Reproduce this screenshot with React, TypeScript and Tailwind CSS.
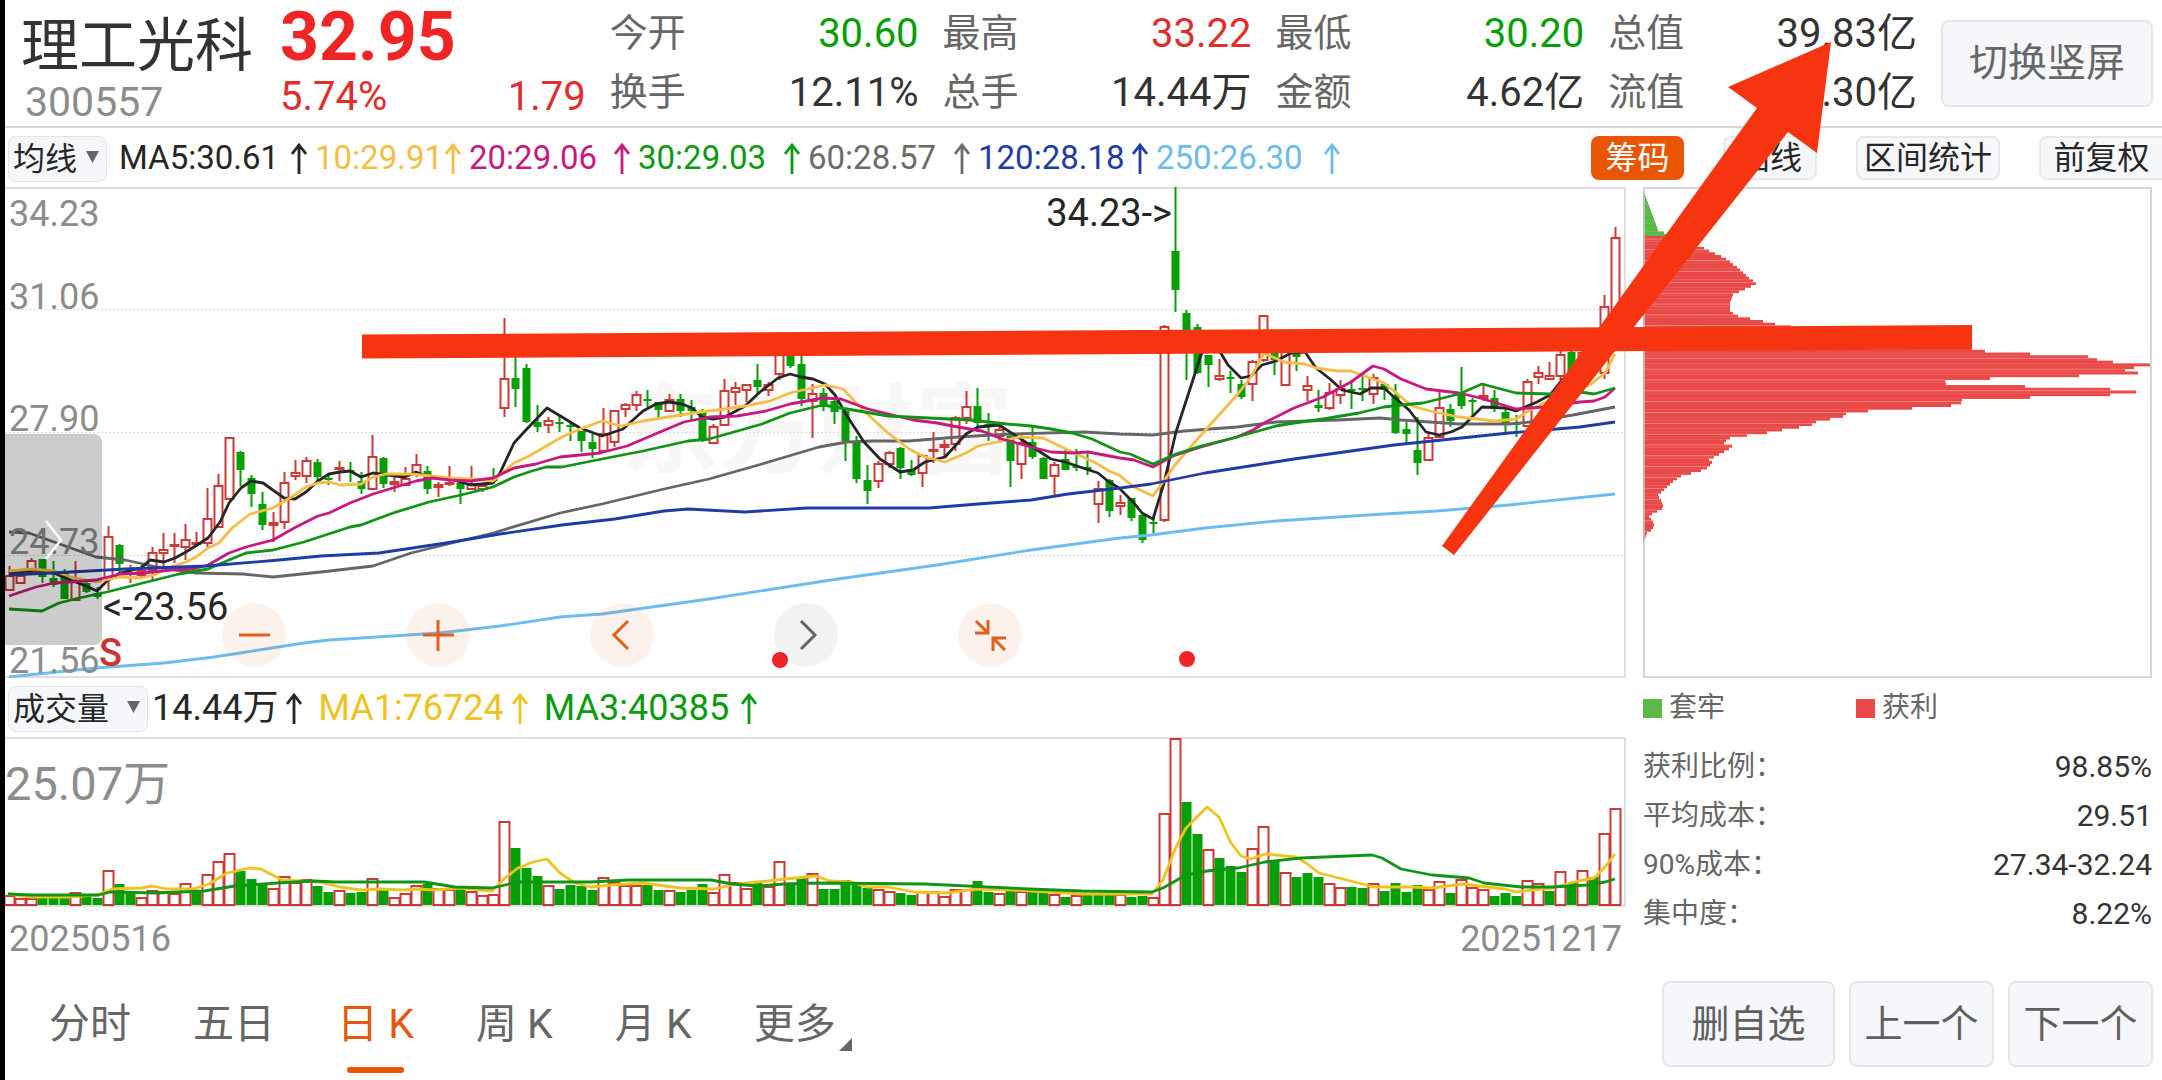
import clsx from "clsx"

type Candle = ["u" | "d", number, number, number, number]
type Point = [number, number]

const UP = "#cb3a36"
const DOWN = "#05a005"

// direction, high, body top, body bottom, low
const candles: Candle[] = [
  ["u", 379, 388, 403, 403], ["u", 383, 388, 396, 396], ["u", 371, 373, 386, 388], ["d", 372, 372, 390, 396],
  ["d", 374, 391, 398, 400], ["d", 382, 386, 412, 412], ["u", 374, 393, 413, 413], ["d", 395, 396, 405, 406],
  ["d", 400, 406, 410, 412], ["u", 339, 349, 391, 403], ["d", 357, 358, 377, 385], ["u", 378, 385, 387, 396],
  ["u", 378, 383, 388, 390], ["u", 360, 365, 383, 394], ["u", 346, 362, 366, 380], ["u", 346, 357, 358, 376],
  ["u", 337, 352, 360, 373], ["u", 345, 355, 357, 360], ["u", 301, 331, 356, 360], ["u", 287, 298, 340, 340],
  ["u", 250, 250, 312, 312], ["d", 264, 265, 283, 299], ["d", 288, 291, 307, 320], ["d", 305, 317, 338, 343],
  ["u", 325, 335, 338, 355], ["u", 285, 295, 335, 342], ["u", 273, 285, 289, 293], ["u", 270, 273, 289, 296],
  ["d", 272, 275, 290, 294], ["d", 286, 291, 293, 298], ["u", 274, 280, 282, 294], ["d", 275, 283, 285, 295],
  ["d", 285, 294, 302, 307], ["u", 248, 269, 302, 302], ["d", 270, 271, 297, 301], ["u", 290, 294, 297, 305],
  ["u", 280, 291, 298, 298], ["u", 267, 277, 286, 290], ["d", 279, 284, 302, 307], ["u", 295, 297, 300, 310],
  ["u", 279, 295, 296, 299], ["d", 295, 296, 302, 317], ["u", 279, 296, 302, 303], ["u", 297, 298, 302, 305],
  ["d", 281, 292, 294, 297], ["u", 131, 191, 221, 230], ["d", 168, 191, 202, 220], ["d", 177, 181, 235, 236],
  ["d", 218, 235, 240, 245], ["u", 230, 233, 238, 246], ["d", 227, 235, 236, 245], ["d", 235, 238, 239, 254],
  ["d", 244, 244, 254, 265], ["d", 247, 255, 262, 271], ["u", 221, 246, 264, 266], ["u", 223, 223, 255, 260],
  ["u", 216, 217, 222, 230], ["u", 204, 207, 218, 224], ["d", 203, 212, 214, 220], ["d", 215, 215, 223, 231],
  ["u", 207, 212, 224, 224], ["d", 207, 212, 224, 230], ["d", 213, 220, 224, 234], ["d", 222, 224, 254, 255],
  ["u", 237, 239, 256, 256], ["u", 192, 203, 238, 238], ["u", 195, 200, 205, 218], ["u", 197, 197, 203, 215],
  ["d", 177, 193, 200, 208], ["u", 195, 197, 203, 209], ["u", 163, 163, 187, 193], ["d", 163, 163, 179, 181],
  ["d", 168, 177, 212, 219], ["u", 197, 206, 214, 251], ["d", 201, 206, 220, 224], ["d", 213, 214, 225, 237],
  ["d", 222, 224, 254, 274], ["d", 249, 254, 292, 296], ["d", 278, 293, 304, 317], ["u", 274, 276, 294, 301],
  ["u", 264, 265, 277, 281], ["d", 260, 261, 281, 292], ["d", 273, 282, 288, 289], ["u", 267, 268, 286, 300],
  ["u", 245, 262, 264, 276], ["u", 253, 257, 260, 270], ["u", 229, 230, 257, 264], ["u", 204, 219, 231, 237],
  ["d", 201, 219, 236, 245], ["d", 226, 237, 238, 254], ["u", 238, 242, 249, 256], ["d", 245, 249, 274, 300],
  ["u", 247, 255, 277, 292], ["d", 239, 255, 270, 272], ["d", 270, 271, 292, 292], ["u", 275, 277, 289, 308],
  ["d", 263, 272, 283, 283], ["d", 262, 279, 281, 284], ["d", 267, 280, 283, 288], ["u", 294, 301, 317, 336],
  ["d", 292, 293, 324, 330], ["u", 308, 315, 319, 328], ["d", 311, 311, 331, 334], ["d", 327, 328, 353, 356],
  ["d", 330, 335, 336, 346], ["u", 138, 139, 333, 335], ["d", 0, 64, 103, 125], ["d", 123, 126, 158, 193],
  ["d", 137, 140, 186, 187], ["d", 168, 168, 178, 200], ["u", 172, 188, 192, 194], ["d", 184, 190, 191, 206],
  ["d", 193, 197, 210, 212], ["u", 173, 174, 197, 214], ["u", 128, 128, 173, 175], ["d", 160, 163, 173, 188],
  ["u", 153, 160, 198, 198], ["d", 156, 160, 170, 184], ["u", 189, 198, 203, 214], ["d", 203, 218, 221, 225],
  ["u", 196, 205, 221, 223], ["u", 193, 201, 208, 217], ["d", 195, 202, 204, 222], ["d", 189, 201, 203, 214],
  ["u", 187, 190, 207, 217], ["d", 196, 197, 203, 213], ["d", 197, 208, 246, 247], ["d", 235, 242, 247, 256],
  ["d", 230, 263, 276, 288], ["u", 245, 250, 273, 273], ["u", 204, 220, 250, 250], ["d", 217, 222, 234, 240],
  ["d", 180, 207, 219, 222], ["d", 211, 213, 214, 232], ["u", 196, 208, 211, 214], ["d", 203, 211, 222, 225],
  ["d", 222, 225, 236, 246], ["d", 228, 236, 238, 250], ["u", 192, 194, 239, 240], ["u", 179, 185, 190, 197],
  ["u", 175, 188, 192, 193], ["u", 163, 167, 189, 193], ["d", 160, 165, 190, 193], ["u", 160, 165, 186, 190],
  ["u", 160, 168, 184, 187], ["u", 108, 119, 186, 192], ["u", 40, 50, 140, 143],
]

const priceLines: { color: string; points: Point[] }[] = [
  {
    color: "#6cbcee",
    points: [[4, 490], [91, 481], [159, 476], [209, 470], [299, 456], [324, 453], [356, 451], [434, 446], [495, 439], [555, 430], [597, 427], [704, 412], [826, 393], [932, 378], [1026, 363], [1115, 351], [1146, 348], [1200, 341], [1271, 334], [1379, 327], [1432, 324], [1504, 318], [1610, 307]],
  },
  {
    color: "#666666",
    points: [[4, 345], [24, 346], [49, 355], [91, 370], [120, 373], [152, 380], [191, 386], [238, 387], [268, 390], [316, 385], [368, 379], [406, 366], [488, 346], [555, 326], [597, 317], [659, 302], [704, 292], [757, 277], [814, 260], [842, 255], [867, 254], [904, 254], [953, 250], [1006, 247], [1079, 245], [1115, 247], [1148, 248], [1179, 244], [1232, 240], [1271, 235], [1332, 233], [1375, 231], [1396, 233], [1454, 237], [1504, 237], [1525, 235], [1568, 228], [1589, 224], [1610, 220]],
  },
  {
    color: "#262626",
    points: [[4, 386], [31, 383], [49, 386], [63, 392], [81, 399], [92, 404], [102, 394], [115, 386], [136, 381], [145, 373], [159, 375], [170, 371], [181, 365], [203, 351], [215, 335], [224, 316], [236, 301], [246, 294], [258, 296], [279, 311], [290, 312], [301, 305], [313, 294], [324, 287], [335, 285], [345, 284], [356, 290], [368, 286], [390, 289], [400, 290], [411, 285], [423, 290], [445, 292], [466, 298], [488, 296], [495, 286], [509, 256], [520, 244], [542, 221], [557, 230], [575, 241], [597, 249], [618, 242], [638, 224], [651, 217], [664, 215], [677, 217], [687, 221], [697, 230], [708, 232], [720, 230], [740, 219], [755, 205], [773, 191], [785, 187], [796, 190], [808, 192], [820, 197], [830, 208], [842, 229], [859, 255], [875, 272], [895, 285], [908, 283], [920, 275], [940, 270], [961, 247], [973, 240], [994, 238], [1016, 252], [1026, 259], [1046, 272], [1060, 275], [1093, 286], [1104, 295], [1114, 301], [1129, 316], [1137, 326], [1148, 332], [1159, 296], [1171, 245], [1196, 168], [1204, 153], [1212, 160], [1223, 178], [1236, 191], [1246, 189], [1257, 178], [1271, 174], [1286, 166], [1300, 165], [1311, 181], [1325, 192], [1337, 203], [1355, 207], [1366, 201], [1379, 201], [1389, 210], [1404, 223], [1421, 245], [1434, 248], [1446, 245], [1457, 240], [1477, 220], [1500, 221], [1511, 224], [1532, 215], [1545, 208], [1557, 193], [1575, 180], [1593, 163], [1610, 140]],
  },
  {
    color: "#f5bd45",
    points: [[4, 384], [27, 382], [49, 384], [66, 390], [91, 395], [115, 390], [136, 391], [149, 388], [166, 380], [181, 375], [191, 370], [203, 361], [214, 356], [227, 341], [245, 327], [268, 321], [288, 309], [301, 300], [313, 296], [324, 295], [335, 298], [356, 297], [368, 290], [381, 287], [406, 287], [445, 291], [466, 292], [488, 294], [509, 276], [524, 269], [557, 250], [575, 242], [597, 234], [616, 239], [638, 234], [663, 230], [695, 225], [720, 222], [740, 219], [765, 214], [785, 206], [820, 198], [838, 202], [859, 224], [883, 246], [904, 262], [920, 270], [940, 275], [961, 266], [973, 259], [997, 254], [1014, 250], [1038, 251], [1063, 263], [1091, 276], [1104, 284], [1114, 288], [1129, 300], [1148, 309], [1170, 278], [1196, 248], [1232, 208], [1246, 190], [1259, 166], [1279, 175], [1300, 177], [1311, 181], [1332, 184], [1346, 184], [1379, 196], [1407, 219], [1425, 224], [1454, 230], [1489, 234], [1511, 232], [1525, 223], [1539, 216], [1557, 210], [1586, 197], [1600, 186], [1610, 167]],
  },
  {
    color: "#c9187e",
    points: [[4, 409], [31, 400], [49, 396], [66, 395], [91, 393], [115, 387], [138, 386], [166, 383], [188, 382], [203, 378], [224, 366], [241, 360], [268, 353], [291, 340], [313, 329], [324, 326], [345, 316], [368, 307], [391, 300], [411, 294], [427, 291], [445, 293], [466, 294], [488, 291], [509, 281], [531, 277], [555, 270], [575, 268], [595, 266], [622, 259], [655, 245], [679, 235], [704, 230], [732, 229], [761, 224], [785, 217], [818, 211], [836, 212], [863, 222], [908, 233], [932, 236], [953, 240], [977, 244], [997, 252], [1026, 260], [1046, 265], [1067, 266], [1083, 265], [1115, 271], [1129, 273], [1148, 280], [1168, 269], [1196, 260], [1232, 250], [1248, 243], [1261, 235], [1289, 221], [1318, 210], [1346, 195], [1368, 179], [1379, 182], [1396, 192], [1421, 202], [1454, 206], [1475, 211], [1511, 222], [1539, 220], [1575, 215], [1589, 214], [1600, 210], [1610, 201]],
  },
  {
    color: "#0f9416",
    points: [[4, 422], [37, 424], [54, 416], [74, 411], [102, 405], [138, 396], [174, 387], [203, 382], [224, 373], [241, 366], [268, 363], [299, 355], [345, 340], [356, 338], [388, 326], [424, 315], [456, 308], [488, 300], [509, 290], [527, 284], [541, 280], [557, 280], [597, 272], [638, 264], [683, 254], [704, 252], [736, 243], [757, 237], [785, 226], [818, 218], [842, 222], [883, 229], [924, 231], [965, 233], [1002, 237], [1026, 239], [1046, 242], [1067, 246], [1087, 252], [1115, 265], [1125, 267], [1148, 277], [1171, 267], [1196, 259], [1232, 250], [1271, 239], [1289, 236], [1318, 232], [1354, 226], [1379, 220], [1396, 218], [1418, 216], [1454, 207], [1477, 197], [1511, 206], [1546, 207], [1575, 205], [1589, 207], [1610, 201]],
  },
  {
    color: "#1f3ba6",
    points: [[4, 388], [66, 385], [120, 382], [202, 379], [274, 373], [316, 369], [374, 366], [441, 356], [495, 347], [557, 338], [610, 332], [659, 324], [683, 322], [740, 325], [802, 321], [883, 321], [924, 321], [973, 317], [1026, 313], [1063, 307], [1115, 301], [1146, 297], [1200, 286], [1289, 272], [1389, 258], [1504, 246], [1575, 240], [1610, 235]],
  },
]

// bar heights, negative on days that closed lower
const volumes = [
  10, 7, 7, -8, -8, -8, 13, -8, -7, 35, -21, -13, 8, 15, 14, 12, 22, -14, 31, 44, 52, -34, -26, -21, 17, 29, 23, 26,
  -19, -13, 15, -12, -13, 27, -17, 8, 12, 20, -21, 17, 16, -16, 14, 10, 11, 84, -57, -37, -29, 20, -16, -20, -19, -15,
  28, 23, 20, 20, -20, -15, 15, -13, -15, -21, 13, 31, 23, 17, -23, 19, 44, -22, -27, 32, -16, -16, -25, -21, -17, 16,
  14, -12, -10, 14, 14, 9, 16, 16, -24, -13, 12, -15, 14, -13, -13, 11, -8, 10, -11, -10, -11, 11, -8, -9, 8, 92, 167,
  -103, -71, 56, -47, -39, -33, 57, 79, -45, 33, -28, -32, -28, 22, 18, -18, -17, 22, -14, -22, -13, -20, 16, 24, -12,
  26, 18, 16, -9, -12, -9, 25, 22, -14, 34, -22, 35, -28, 72, 97,
]

const volumeLines: { color: string; points: Point[] }[] = [
  {
    color: "#efc31f",
    points: [[3, 157], [26, 160], [63, 160], [92, 158], [107, 152], [136, 151], [147, 149], [162, 152], [188, 152], [204, 147], [222, 136], [245, 131], [256, 132], [277, 143], [296, 144], [314, 145], [335, 150], [356, 153], [377, 152], [398, 153], [413, 152], [429, 153], [455, 151], [487, 154], [500, 141], [513, 131], [528, 125], [542, 122], [555, 136], [570, 146], [586, 150], [607, 148], [638, 146], [675, 151], [709, 152], [732, 147], [753, 145], [780, 142], [811, 139], [825, 144], [846, 145], [862, 150], [883, 150], [909, 155], [941, 156], [972, 152], [1009, 153], [1077, 157], [1147, 157], [1158, 143], [1171, 110], [1181, 91], [1202, 70], [1214, 80], [1226, 106], [1236, 119], [1246, 122], [1260, 117], [1291, 120], [1301, 126], [1314, 136], [1338, 142], [1369, 150], [1406, 150], [1427, 151], [1458, 147], [1500, 152], [1511, 155], [1547, 151], [1573, 144], [1589, 141], [1600, 130], [1610, 117]],
  },
  {
    color: "#0f9416",
    points: [[3, 157], [26, 158], [94, 158], [105, 155], [152, 156], [199, 154], [230, 149], [272, 146], [309, 144], [330, 145], [419, 145], [450, 150], [487, 151], [513, 145], [549, 145], [586, 145], [623, 143], [706, 143], [727, 147], [753, 149], [780, 147], [815, 146], [920, 147], [1024, 152], [1077, 154], [1147, 155], [1158, 151], [1181, 138], [1202, 134], [1233, 131], [1260, 125], [1296, 121], [1367, 118], [1377, 121], [1396, 132], [1427, 138], [1464, 141], [1479, 146], [1516, 150], [1547, 150], [1584, 148], [1600, 145], [1610, 142]],
  },
]

const trappedChips = [0, 1, 2, 3, 4, 5, 6, 7, 8, 9, 10, 11, 12, 13, 14, 15, 21, 26]
const profitChips = [
  34, 41, 46, 51, 61, 66, 72, 78, 83, 87, 90, 94, 97, 100, 103, 106, 110, 113, 108, 102, 96, 90, 89, 88, 87, 87, 87, 87,
  90, 95, 107, 120, 132, 148, 172, 200, 229, 258, 279, 301, 315, 329, 342, 387, 445, 454, 470, 507, 491, 482, 495, 436,
  347, 302, 303, 382, 467, 493, 467, 387, 319, 318, 308, 269, 225, 203, 200, 187, 173, 169, 156, 139, 124, 104, 87, 83,
  81, 89, 86, 81, 76, 71, 66, 69, 67, 64, 58, 48, 38, 34, 30, 27, 24, 21, 18, 15, 16, 18, 19, 20, 19, 14, 9, 6, 8, 10,
  11, 10, 8, 4, 3, 2, 1,
]

const quotes = [
  [
    { label: "今开", value: "30.60", color: "text-[#05a005]" },
    { label: "换手", value: "12.11%", color: "text-[#333]" },
  ],
  [
    { label: "最高", value: "33.22", color: "text-[#e02d2d]" },
    { label: "总手", value: "14.44万", color: "text-[#333]" },
  ],
  [
    { label: "最低", value: "30.20", color: "text-[#05a005]" },
    { label: "金额", value: "4.62亿", color: "text-[#333]" },
  ],
  [
    { label: "总值", value: "39.83亿", color: "text-[#333]" },
    { label: "流值", value: "39.30亿", color: "text-[#333]" },
  ],
]

const averages = [
  { text: "MA5:30.61", color: "text-[#262626]" },
  { text: "10:29.91", color: "text-[#f5bd45]" },
  { text: "20:29.06", color: "text-[#c9187e]" },
  { text: "30:29.03", color: "text-[#0a9a10]" },
  { text: "60:28.57", color: "text-[#6b6b6b]" },
  { text: "120:28.18", color: "text-[#1f3ba6]" },
  { text: "250:26.30", color: "text-[#6cbcee]" },
]

const axisLabels = [
  { text: "34.23", top: "top-[9px]" },
  { text: "31.06", top: "top-[92px]" },
  { text: "27.90", top: "top-[214px]" },
  { text: "24.73", top: "top-[337px]" },
  { text: "21.56", top: "top-[456px]" },
]

const stats = [
  { label: "获利比例：", value: "98.85%" },
  { label: "平均成本：", value: "29.51" },
  { label: "90%成本：", value: "27.34-32.24" },
  { label: "集中度：", value: "8.22%" },
]

const tabs = ["分时", "五日", "日 K", "周 K", "月 K", "更多"]

const chartTools = [
  { id: "out", label: "缩小", gray: false, d: "M17 32H48" },
  { id: "in", label: "放大", gray: false, d: "M17 32H48M32 17V48" },
  { id: "prev", label: "向左", gray: false, d: "M38 18L24 32L38 46" },
  { id: "next", label: "向右", gray: true, d: "M27 18L41 32L27 46" },
  { id: "fold", label: "收起", gray: false, d: "M18 18L29 29M17 30H30V17M47 47L36 36M48 35H35V48" },
]

const barX = (i: number) => 4.5 + i * 11
const toPoints = (points: Point[]) => points.map((p) => p.join(",")).join(" ")

function UpArrow() {
  return (
    <svg width="16" height="32" viewBox="0 0 16 32" className="shrink-0" aria-hidden="true">
      <path d="M8 32V2M1 12L8 3L15 12" fill="none" stroke="currentColor" strokeWidth="2.8" />
    </svg>
  )
}

function Picker({ id, name, value, className }: { id: string; name: string; value: string; className: string }) {
  return (
    <div className={clsx("relative h-[46px] shrink-0 text-[32px] text-[#262626]", className)}>
      <label htmlFor={id} className="sr-only">
        {name}
      </label>
      <select
        id={id}
        className="h-full w-full appearance-none rounded-lg border border-[#e0e3e7] bg-[#f6f7fa] pl-1 leading-none"
      >
        <option>{value}</option>
      </select>
      <svg
        width="13"
        height="12"
        viewBox="0 0 13 12"
        className="pointer-events-none absolute right-2 top-4"
        aria-hidden="true"
      >
        <path d="M0 0H13L6.500 12Z" fill="#666" />
      </svg>
    </div>
  )
}

function QuoteHeader() {
  return (
    <header className="flex h-32 border-b-2 border-[#d8d8d8] pl-4 pr-[9px]">
      <div className="w-[259px] shrink-0 pt-2">
        <h1 className="text-[58px] leading-[76px] text-[#333]">理工光科</h1>
        <p className="pl-1 text-[41px] leading-9 text-[#8c8c8c]">300557</p>
      </div>
      <div className="mr-6 flex-1">
        <p className="text-[68px] font-bold leading-[74px] text-[#f02424]">32.95</p>
        <p className="flex justify-between text-[40px] leading-[46px] text-[#e02d2d]">
          <span>5.74%</span>
          <span>1.79</span>
        </p>
      </div>
      <div className="grid flex-[4_1_84px] grid-cols-4 gap-x-6 pt-1">
        {quotes.map((column) => (
          <dl key={column[0].label}>
            {column.map((item) => (
              <div key={item.label} className="flex justify-between leading-[59px]">
                <dt className="text-[38px] text-[#666]">{item.label}</dt>
                <dd className={clsx("text-[40px]", item.color)}>{item.value}</dd>
              </div>
            ))}
          </dl>
        ))}
      </div>
      <button className="ml-6 mt-5 h-[87px] w-[212px] shrink-0 rounded-lg border-2 border-[#e3e6ea] bg-[#f6f7fa] text-[39px] text-[#666]">
        切换竖屏
      </button>
    </header>
  )
}

function ToolRow() {
  const button = "h-11 shrink-0 rounded-lg border-2 border-[#e6e8eb] bg-[#f6f7fa] leading-[38px] text-[#262626]"
  return (
    <div className="flex h-[59px] items-center pl-[3px]">
      <Picker id="indicator" name="指标" value="均线" className="w-[99px]" />
      <ul className="ml-3 grid grid-cols-[196px_154px_169px_170px_170px_178px_192px] text-[33px]">
        {averages.map((item) => (
          <li key={item.text} className={clsx("flex items-center justify-between pr-2", item.color)}>
            {item.text}
            <UpArrow />
          </li>
        ))}
      </ul>
      <div className="ml-auto flex gap-[39px] text-[32px]">
        <button className="h-11 w-[93px] shrink-0 rounded-lg bg-[#ea5504] leading-[42px] text-white">筹码</button>
        <button className={clsx(button, "w-[94px]")}>画线</button>
        <button className={clsx(button, "w-[144px]")}>区间统计</button>
        <button className={clsx(button, "w-[123px] rounded-r-none border-r-0")}>前复权</button>
      </div>
    </div>
  )
}

function PriceChart() {
  return (
    <div className="relative">
      <svg viewBox="0 0 1621 491" className="block w-full" role="img" aria-label="日K">
        <text x="812" y="278" textAnchor="middle" className="fill-[#f7f7f7] text-[98px] font-bold">
          东方财富
        </text>
        {[122, 245, 368].map((y) => (
          <path key={y} d={`M0 ${y}.5H1620`} stroke="#dcdcdc" strokeDasharray="2 2" />
        ))}
        <path d="M0 1H1620V490H0" fill="none" stroke="#dfe0df" strokeWidth="2" />
        {candles.map(([dir, high, top, bottom, low], i) => {
          const x = barX(i)
          if (dir === "d") {
            return (
              <g key={i} fill={DOWN}>
                <rect x={x - 1} y={high} width="2" height={low - high} />
                <rect x={x - 4} y={top} width="8" height={Math.max(bottom - top, 2)} />
              </g>
            )
          }
          return (
            <g key={i} fill="none" stroke={UP} strokeWidth="2">
              <path d={`M${x} ${high}V${top}M${x} ${bottom}V${low}`} />
              <rect x={x - 4} y={top + 1} width="8" height={Math.max(bottom - top - 1, 1)} />
            </g>
          )
        })}
        {priceLines.map((line) => (
          <polyline
            key={line.color}
            points={toPoints(line.points)}
            fill="none"
            stroke={line.color}
            strokeWidth="2.8"
            strokeLinejoin="round"
          />
        ))}
        <circle cx="775" cy="473" r="8" fill="#f02424" />
        <circle cx="1182" cy="472" r="8" fill="#f02424" />
      </svg>

      {axisLabels.map((label) => (
        <span key={label.text} className={clsx("absolute left-1 text-[36px] leading-9 text-[#8c8c8c]", label.top)}>
          {label.text}
        </span>
      ))}
      <span className="absolute left-[98px] top-[402px] text-[38px] leading-9 text-[#262626]">&lt;-23.56</span>
      <span className="absolute right-[454px] top-2 text-[38px] leading-9 text-[#262626]">34.23-&gt;</span>
      <span className="absolute left-[94px] top-[448px] text-[38px] font-medium leading-9 text-[#c93431]">S</span>

      <button
        aria-label="展开"
        className="absolute left-0 top-[247px] flex h-[211px] w-[97px] items-center justify-center rounded-r-lg bg-black/20"
      >
        <svg width="18" height="40" viewBox="0 0 18 40" aria-hidden="true">
          <path d="M1 1L16 20L1 39" fill="none" stroke="#fff" strokeWidth="2.500" />
        </svg>
      </button>

      <div className="absolute left-[217px] top-[416px] flex gap-[120px]">
        {chartTools.map((tool) => (
          <button
            key={tool.id}
            aria-label={tool.label}
            className={clsx(
              "size-16 rounded-full",
              tool.gray ? "bg-black/5 text-[#666]" : "bg-[#ea5504]/8 text-[#e06018]"
            )}
          >
            <svg viewBox="0 0 64 64" className="size-16" aria-hidden="true">
              <path d={tool.d} fill="none" stroke="currentColor" strokeWidth="3" />
            </svg>
          </button>
        ))}
      </div>
    </div>
  )
}

function VolumeChart() {
  return (
    <div className="relative">
      <svg viewBox="0 0 1621 170" className="block w-full" role="img" aria-label="成交量">
        <path d="M0 1H1620V169H0" fill="none" stroke="#dfe0df" strokeWidth="2" />
        {volumes.map((v, i) =>
          v < 0 ? (
            <rect key={i} x={barX(i) - 5} y={168 + v} width="10" height={-v} fill={DOWN} />
          ) : (
            <rect
              key={i}
              x={barX(i) - 5}
              y={169 - v}
              width="10"
              height={v - 1}
              fill="#fff"
              stroke={UP}
              strokeWidth="2"
            />
          )
        )}
        {volumeLines.map((line) => (
          <polyline
            key={line.color}
            points={toPoints(line.points)}
            fill="none"
            stroke={line.color}
            strokeWidth="2.8"
            strokeLinejoin="round"
          />
        ))}
      </svg>
      <span className="absolute left-0 top-5 text-[47px] leading-[54px] text-[#8c8c8c]">25.07万</span>
    </div>
  )
}

function ChipChart() {
  const row = 2.71
  return (
    <svg viewBox="0 0 509 491" className="block w-full" role="img" aria-label="筹码">
      {trappedChips.map((w, i) => (
        <rect key={i} x="0" y={1 + i * row} width={w} height={row + 0.3} fill="#5bb947" />
      ))}
      {profitChips.map((w, i) => (
        <rect key={i} x="0" y={49 + i * row} width={w} height={row + 0.3} fill="#e94a48" />
      ))}
      {/* thin seams between price levels */}
      {profitChips.map((w, i) =>
        i % 4 === 1 ? <rect key={i} x="0" y={49 + i * row} width={w} height="0.700" fill="#f49490" /> : null
      )}
      <path d="M1 1H508V490H1Z" fill="none" stroke="#c9c9c9" strokeWidth="1.500" />
    </svg>
  )
}

function ChipPanel() {
  return (
    <aside className="w-[509px] shrink-0">
      <ChipChart />
      <div className="flex h-[60px] items-center text-[28px] text-[#666]">
        <span className="flex w-[213px] items-center gap-[7px]">
          <span className="size-[19px] bg-[#5bb947]" />
          套牢
        </span>
        <span className="flex items-center gap-[7px]">
          <span className="size-[19px] bg-[#e94a48]" />
          获利
        </span>
      </div>
      <table className="mt-1 w-full leading-[49px]">
        <tbody>
          {stats.map((item) => (
            <tr key={item.label}>
              <th scope="row" className="p-0 text-left text-[28px] font-normal text-[#666]">
                {item.label}
              </th>
              <td className="p-0 text-right text-[30px] text-[#333]">{item.value}</td>
            </tr>
          ))}
        </tbody>
      </table>
    </aside>
  )
}

function BottomBar() {
  const button = "h-[86px] rounded-lg border-2 border-[#e3e6ea] bg-[#f6f7fa] text-[38px] text-[#5f5f5f]"
  return (
    <footer className="flex items-start justify-between pl-11 pr-[9px]">
      <nav className="flex gap-[62px] text-[41px] leading-[86px]">
        {tabs.map((tab) => (
          <button key={tab} className={clsx("relative", tab === "日 K" ? "text-[#e35a0c]" : "text-[#666]")}>
            {tab}
            {tab === "日 K" && (
              <span className="absolute inset-x-2.5 -bottom-1.5 h-1.5 rounded-full bg-[#ea5504]" />
            )}
            {tab === "更多" && (
              <svg width="13" height="13" viewBox="0 0 13 13" className="absolute -right-4 bottom-4" aria-hidden="true">
                <path d="M13 0V13H0Z" fill="#666" />
              </svg>
            )}
          </button>
        ))}
      </nav>
      <div className="flex gap-[14px]">
        <button className={clsx(button, "w-[173px]")}>删自选</button>
        <button className={clsx(button, "w-[145px]")}>上一个</button>
        <button className={clsx(button, "w-[145px]")}>下一个</button>
      </div>
    </footer>
  )
}

function Annotations() {
  return (
    <svg
      viewBox="0 0 2162 1080"
      className="pointer-events-none absolute left-0 top-0 w-full"
      fill="#f63410"
      aria-hidden="true"
    >
      <path d="M362 334.500L1972 325V349L362 358.500Z" />
      <path d="M1442 546L1757 108L1728 87L1831 42L1817 153L1788 132L1454 555Z" />
    </svg>
  )
}

export default function App() {
  return (
    <div className="relative min-h-screen overflow-hidden bg-white font-['Roboto','Noto_Sans_CJK_SC',sans-serif]">
      <div className="min-h-screen border-l-[5px] border-black">
        <QuoteHeader />
        <ToolRow />
        <main className="flex gap-[17px] pr-[10px]">
          <div className="flex-1">
            <PriceChart />
            <div className="flex h-[59px] items-center pl-[3px] text-[36px]">
              <Picker id="sub-indicator" name="副图指标" value="成交量" className="w-[140px]" />
              <p className="ml-1 flex items-center gap-2 text-[#262626]">
                14.44万
                <UpArrow />
              </p>
              <p className="ml-4 flex items-center gap-2 text-[#efc31f]">
                MA1:76724
                <UpArrow />
              </p>
              <p className="ml-4 flex items-center gap-3 text-[#0a9a10]">
                MA3:40385
                <UpArrow />
              </p>
            </div>
            <VolumeChart />
            <div className="flex justify-between px-1 pt-2 text-[36px] leading-[48px] text-[#8c8c8c]">
              <time dateTime="2025-05-16">20250516</time>
              <time dateTime="2025-12-17">20251217</time>
            </div>
          </div>
          <ChipPanel />
        </main>
        <div className="mt-[18px]">
          <BottomBar />
        </div>
      </div>
      <Annotations />
    </div>
  )
}
